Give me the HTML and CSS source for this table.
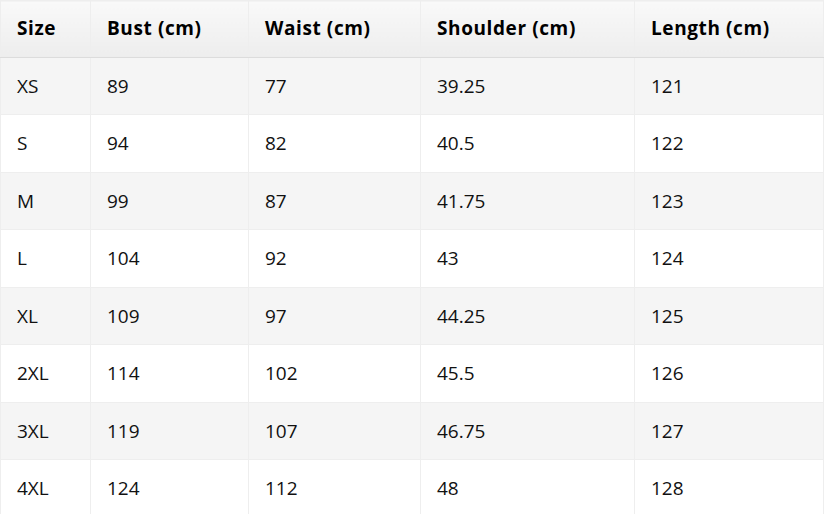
FILE: index.html
```html
<!DOCTYPE html>
<html>
<head>
<meta charset="utf-8">
<link rel="stylesheet" href="styles.css">
</head>
<body>
<table class="size-table">
  <colgroup>
    <col class="c1"><col class="c2"><col class="c3"><col class="c4"><col class="c5">
  </colgroup>
  <thead>
    <tr><th>Size</th><th>Bust (cm)</th><th>Waist (cm)</th><th>Shoulder (cm)</th><th>Length (cm)</th></tr>
  </thead>
  <tbody>
    <tr><td>XS</td><td>89</td><td>77</td><td>39.25</td><td>121</td></tr>
    <tr><td>S</td><td>94</td><td>82</td><td>40.5</td><td>122</td></tr>
    <tr><td>M</td><td>99</td><td>87</td><td>41.75</td><td>123</td></tr>
    <tr><td>L</td><td>104</td><td>92</td><td>43</td><td>124</td></tr>
    <tr><td>XL</td><td>109</td><td>97</td><td>44.25</td><td>125</td></tr>
    <tr><td>2XL</td><td>114</td><td>102</td><td>45.5</td><td>126</td></tr>
    <tr><td>3XL</td><td>119</td><td>107</td><td>46.75</td><td>127</td></tr>
    <tr><td>4XL</td><td>124</td><td>112</td><td>48</td><td>128</td></tr>
  </tbody>
</table>
</body>
</html>
```
FILE: styles.css
```css
html, body {
  margin: 0;
  padding: 0;
  background: #fff;
}
.size-table {
  width: 823px;
  border-collapse: collapse;
  table-layout: fixed;
  font-family: "Open Sans", "Noto Sans", sans-serif;
  font-size: 19px;
  color: #111;
  border: 1px solid #eee;
}
.c1 { width: 90px; }
.c2 { width: 158px; }
.c3 { width: 172px; }
.c4 { width: 214px; }
.c5 { width: 189px; }
.size-table th,
.size-table td {
  text-align: left;
  padding: 16px 16px;
  line-height: 24.5px;
  border: 1px solid #eee;
  border-top: none;
  border-bottom: 1px solid #eee;
  white-space: nowrap;
}
.size-table th {
  font-weight: 700;
  letter-spacing: 0.6px;
  line-height: 23.5px;
  padding-top: 16px;
  padding-bottom: 16px;
  background: linear-gradient(to bottom, #f9f9f9, #ededed);
  border-bottom: 1px solid #dcdcdc;
  border-top: 1px solid #eee;
  color: #000;
}
.size-table tbody tr:nth-child(odd) td {
  background: #f5f5f5;
}
.size-table tbody tr:nth-child(even) td {
  background: #fff;
}
```
